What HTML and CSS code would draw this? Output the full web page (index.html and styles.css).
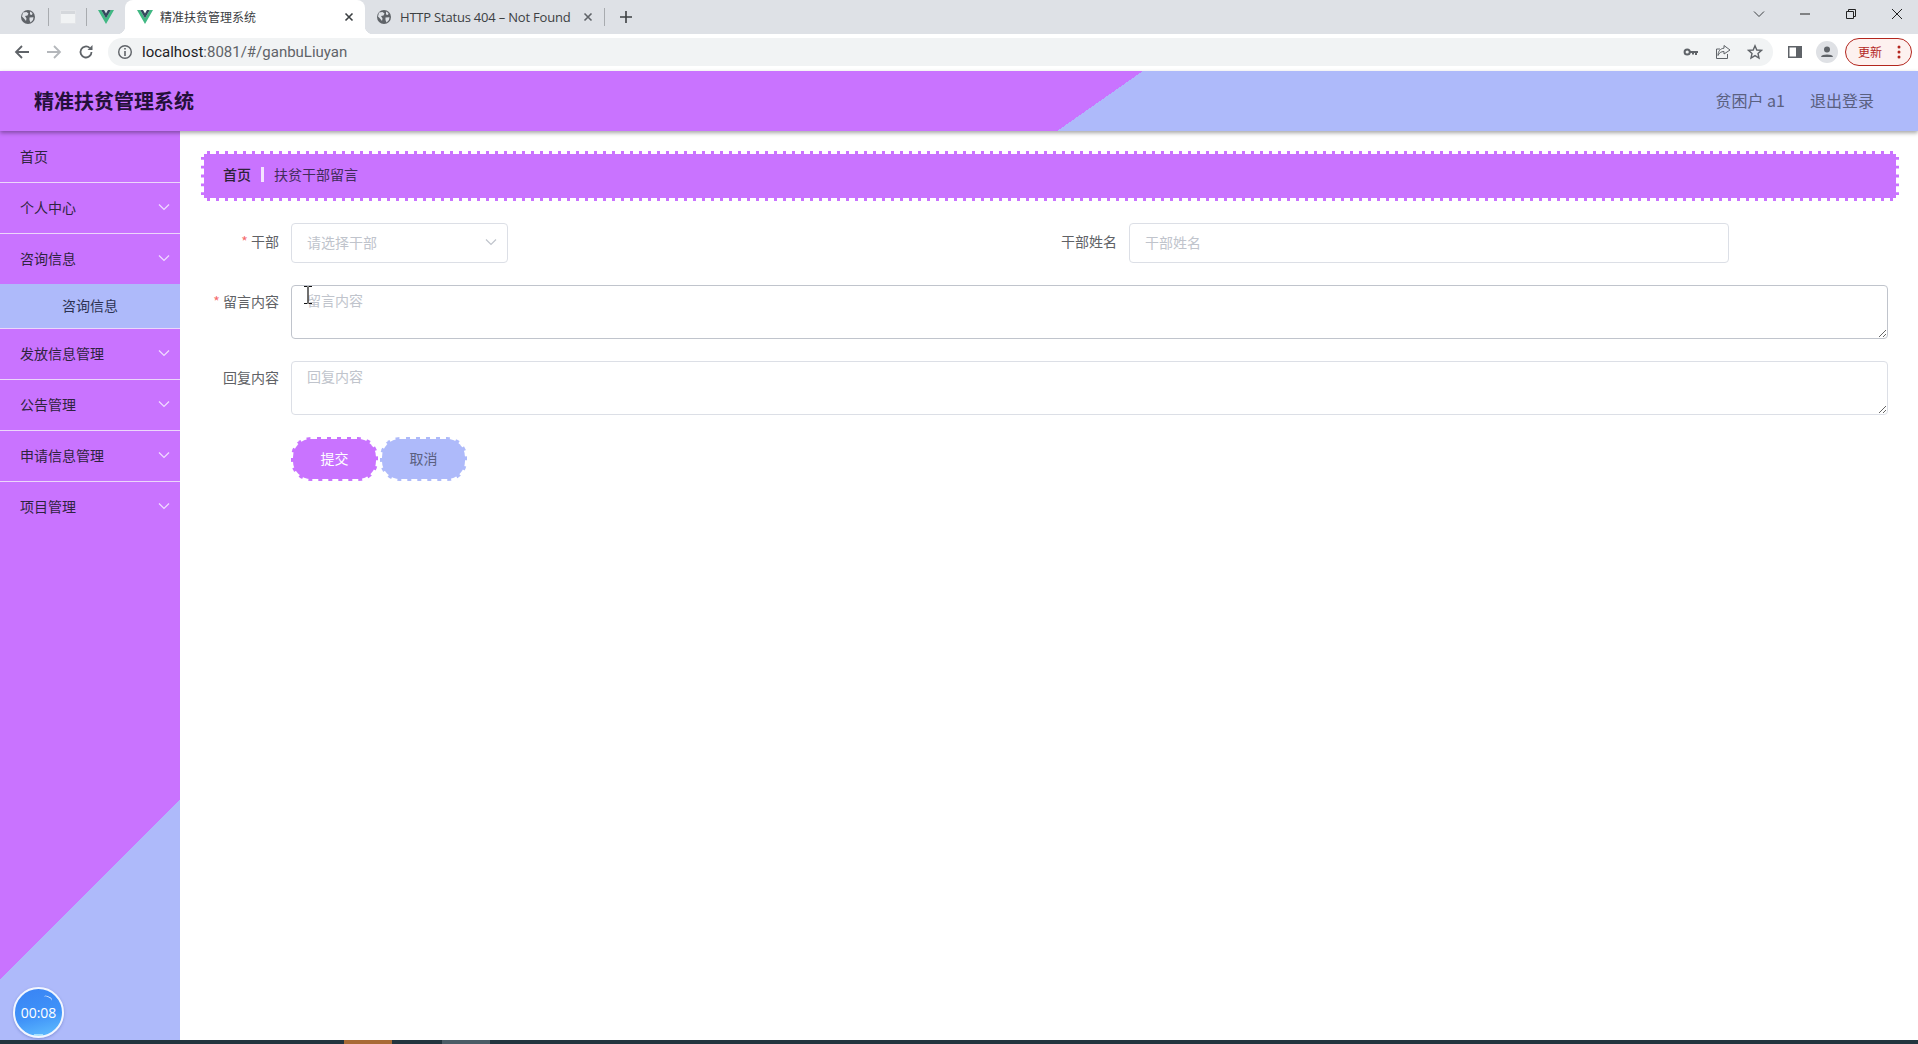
FILE: index.html
```html
<!DOCTYPE html>
<html lang="zh-CN">
<head>
<meta charset="utf-8">
<title>精准扶贫管理系统</title>
<link rel="stylesheet" href="styles.css">
</head>
<body>
<svg class="defs" width="0" height="0" aria-hidden="true">
  <defs>
    <symbol id="globe" viewBox="0 0 16 16"><circle cx="8" cy="8" r="7" fill="#5f6368"/><path d="M3 3.5 6.5 3 8.5 4.5 7.5 6.5 5 7 6.5 9.5 6 12 4 9.5 2 7.5ZM10 2.5 12.5 4 12 6 10 5.5ZM9.5 8.5 13.5 8.2 13 11 10.5 13.5 9.5 11Z" fill="#dee1e6"/></symbol>
    <symbol id="vue" viewBox="0 0 16 14"><path d="M0 0H3.2L8 8.3 12.8 0H16L8 14Z" fill="#41b883"/><path d="M3.2 0H6L8 3.5 10 0H12.8L8 8.3Z" fill="#35495e"/></symbol>
    <symbol id="chev" viewBox="0 0 12 8"><path d="M1 1.5 6 6.5 11 1.5" fill="none" stroke="currentColor" stroke-width="1.2"/></symbol>
  </defs>
</svg>

<div class="tabstrip">
  <div class="pin pin-a"><svg class="ico16"><use href="#globe"/></svg></div>
  <div class="pin pin-b"><svg class="ico16" viewBox="0 0 16 16"><rect x="0.5" y="1.5" width="15" height="13" fill="#f1f3f4" stroke="#e3e5e8"/><rect x="1" y="2" width="14" height="3" fill="#d5d8dc"/></svg></div>
  <div class="pin pin-c"><svg class="ico-vue"><use href="#vue"/></svg></div>
  <div class="tab tab-active">
    <svg class="ico-vue"><use href="#vue"/></svg>
    <span class="tab-title tab-title-cjk">精准扶贫管理系统</span>
    <svg class="tab-close" viewBox="0 0 10 10"><path d="M1.5 1.5 8.5 8.5M8.5 1.5 1.5 8.5" stroke="#3c4043" stroke-width="1.6"/></svg>
  </div>
  <div class="tab tab-idle">
    <svg class="ico16"><use href="#globe"/></svg>
    <span class="tab-title">HTTP Status 404 – Not Found</span>
    <svg class="tab-close" viewBox="0 0 10 10"><path d="M1.5 1.5 8.5 8.5M8.5 1.5 1.5 8.5" stroke="#5f6368" stroke-width="1.6"/></svg>
  </div>
  <svg class="tab-new" viewBox="0 0 12 12"><path d="M6 0V12M0 6H12" stroke="#3c4043" stroke-width="1.6"/></svg>
  <div class="win">
    <div class="win-btn"><svg class="win-chev" viewBox="0 0 12 8"><path d="M1 1.5 6 6.5 11 1.5" fill="none" stroke="#3c4043" stroke-width="1"/></svg></div>
    <div class="win-btn"><svg class="ico10" viewBox="0 0 10 10"><path d="M0 5H10" stroke="#222" stroke-width="1"/></svg></div>
    <div class="win-btn"><svg class="ico10" viewBox="0 0 10 10"><path d="M.5 2.5H7.5V9.5H.5ZM2.5 2.5V.5H9.5V7.5H7.5" fill="none" stroke="#222" stroke-width="1"/></svg></div>
    <div class="win-btn"><svg class="ico10" viewBox="0 0 10 10"><path d="M0 0 10 10M10 0 0 10" stroke="#222" stroke-width="1"/></svg></div>
  </div>
</div>

<div class="toolbar">
  <div class="nav-btn"><svg class="ico16" viewBox="0 0 16 16"><path d="M15 8H2M8 2 2 8 8 14" fill="none" stroke="#5f6368" stroke-width="1.8"/></svg></div>
  <div class="nav-btn"><svg class="ico16" viewBox="0 0 16 16"><path d="M1 8H14M8 2 14 8 8 14" fill="none" stroke="#b4b7bb" stroke-width="1.8"/></svg></div>
  <div class="nav-btn"><svg class="ico16" viewBox="0 0 16 16"><path d="M13.5 8A5.5 5.5 0 1 1 11.7 3.9" fill="none" stroke="#5f6368" stroke-width="1.8"/><path d="M9.5 6H14.5V1Z" fill="#5f6368"/></svg></div>
  <div class="omnibox">
    <svg class="ico16" viewBox="0 0 16 16"><circle cx="8" cy="8" r="6.3" fill="none" stroke="#5f6368" stroke-width="1.4"/><path d="M8 7V12M8 4V5.6" stroke="#5f6368" stroke-width="1.6"/></svg>
    <span class="url"><span class="url-host">localhost</span>:8081/#/ganbuLiuyan</span>
    <div class="omni-icons">
      <div class="nav-btn"><svg class="ico16" viewBox="0 0 16 16"><circle cx="4.2" cy="8" r="2.6" fill="none" stroke="#5f6368" stroke-width="2"/><path d="M7 7H15V9H14V11H12V9H11V10.5H9V9H7Z" fill="#5f6368"/></svg></div>
      <div class="nav-btn"><svg class="ico16" viewBox="0 0 16 16"><path d="M9 1.5 15 6 9 10V7.5C6 7.5 4 9 3 11.5 3 7 5.500 4.500 9 4.200Z" fill="none" stroke="#5f6368" stroke-width="1"/><path d="M5 5H1.500V14.500H12.500V10" fill="none" stroke="#5f6368" stroke-width="1"/></svg></div>
      <div class="nav-btn"><svg class="ico16" viewBox="0 0 16 16"><path d="M8 1.800 9.800 6 14.500 6.400 11 9.400 12 14 8 11.600 4 14 5 9.400 1.500 6.400 6.200 6Z" fill="none" stroke="#5f6368" stroke-width="1.400"/></svg></div>
    </div>
  </div>
  <div class="tool-right">
    <div class="nav-btn"><svg class="ico16" viewBox="0 0 16 16"><rect x="1" y="2" width="14" height="12" fill="#5f6368"/><rect x="2.500" y="3.500" width="6.500" height="9" fill="#fff"/></svg></div>
    <div class="nav-btn"><svg class="avatar" viewBox="0 0 22 22"><circle cx="11" cy="11" r="11" fill="#dfe1e5"/><circle cx="11" cy="8.500" r="3" fill="#5f6368"/><path d="M5 16C5.500 12.800 16.500 12.800 17 16Z" fill="#5f6368"/></svg></div>
    <div class="update">
      <span class="update-text">更新</span>
      <svg class="update-dots" viewBox="0 0 4 14"><circle cx="2" cy="2" r="1.500"/><circle cx="2" cy="7" r="1.500"/><circle cx="2" cy="12" r="1.500"/></svg>
    </div>
  </div>
</div>

<header class="app-header">
  <div class="app-title">精准扶贫管理系统</div>
  <div class="app-user">
    <span>贫困户 a1</span>
    <span>退出登录</span>
  </div>
</header>

<main class="app-main">
  <aside class="sidebar">
    <div class="menu-item">首页</div>
    <div class="menu-item">个人中心<svg class="menu-chev"><use href="#chev"/></svg></div>
    <div class="menu-item menu-open">咨询信息<svg class="menu-chev"><use href="#chev"/></svg></div>
    <div class="menu-sub">咨询信息</div>
    <div class="menu-item">发放信息管理<svg class="menu-chev"><use href="#chev"/></svg></div>
    <div class="menu-item">公告管理<svg class="menu-chev"><use href="#chev"/></svg></div>
    <div class="menu-item">申请信息管理<svg class="menu-chev"><use href="#chev"/></svg></div>
    <div class="menu-item menu-last">项目管理<svg class="menu-chev"><use href="#chev"/></svg></div>
    <div class="timer">00:08</div>
  </aside>

  <section class="content">
    <nav class="crumb">
      <span class="crumb-home">首页</span>
      <span class="crumb-sep"></span>
      <span class="crumb-page">扶贫干部留言</span>
    </nav>

    <form class="form">
      <div class="form-row form-row-split">
        <div class="field">
          <label class="field-label"><span class="req">*</span> 干部</label>
          <div class="select">
            <span>请选择干部</span>
            <svg class="select-chev"><use href="#chev"/></svg>
          </div>
        </div>
        <div class="field">
          <label class="field-label">干部姓名</label>
          <input class="input" type="text" placeholder="干部姓名">
        </div>
      </div>
      <div class="field field-area">
        <label class="field-label"><span class="req">*</span> 留言内容</label>
        <textarea class="area area-hover" placeholder="留言内容"></textarea>
      </div>
      <div class="field field-area">
        <label class="field-label">回复内容</label>
        <textarea class="area" placeholder="回复内容"></textarea>
      </div>
      <div class="actions">
        <button class="btn btn-primary" type="button">提交</button>
        <button class="btn btn-cancel" type="button">取消</button>
      </div>
    </form>
    <svg class="ibeam" viewBox="0 0 8 18"><path d="M0 .5H3.500M4.500 .5H8M4 1V17M0 17.500H3.500M4.500 17.500H8" fill="none" stroke="#111" stroke-width="1.200"/></svg>
  </section>
</main>

<div class="taskbar">
  <span class="task task-orange"></span>
  <span class="task task-grey"></span>
</div>
</body>
</html>
```

FILE: styles.css
```css
* { box-sizing: border-box; }

html, body {
  margin: 0;
  height: 100%;
  overflow: hidden;
}

body {
  display: flex;
  flex-direction: column;
  height: 1044px;
  background: #fff;
  font-family: "Noto Sans CJK SC", "Noto Sans", sans-serif;
  font-size: 14px;
}

.defs { display: block; height: 0; }

.ico16 { width: 16px; height: 16px; display: block; flex: none; }
.ico10 { width: 10px; height: 10px; display: block; }
.ico-vue { width: 16px; height: 14px; display: block; flex: none; }

/* browser tab strip */
.tabstrip {
  height: 34px;
  flex: none;
  display: flex;
  align-items: stretch;
  padding-left: 8px;
  background: #dee1e6;
}

.pin {
  display: flex;
  align-items: center;
  justify-content: center;
  position: relative;
}
.pin-a { width: 41px; padding-right: 1px; }
.pin-b { width: 38px; }
.pin-c { width: 38px; }
.pin-a::after, .pin-b::after {
  content: "";
  position: absolute;
  right: 0;
  top: 8px;
  bottom: 8px;
  width: 1px;
  background: #a8abaf;
}

.tab {
  display: flex;
  align-items: center;
  position: relative;
}
.tab-active {
  width: 240px;
  padding-left: 12px;
  background: #fff;
  border-radius: 8px 8px 0 0;
}
.tab-active::before, .tab-active::after {
  content: "";
  position: absolute;
  bottom: 0;
  width: 8px;
  height: 8px;
}
.tab-active::before {
  left: -8px;
  background: radial-gradient(circle at 0 0, #dee1e6 8px, #fff 8.500px);
}
.tab-active::after {
  right: -8px;
  background: radial-gradient(circle at 100% 0, #dee1e6 8px, #fff 8.500px);
}
.tab-idle {
  width: 240px;
  padding-left: 11px;
  position: relative;
}
.tab-idle::after {
  content: "";
  position: absolute;
  left: 239px;
  top: 8px;
  bottom: 8px;
  width: 1px;
  background: #a8abaf;
}
.tab-title {
  margin-left: 8px;
  font: 13px/16px "Open Sans", "Noto Sans", sans-serif;
  color: #3c4043;
  white-space: nowrap;
}
.tab-title-cjk {
  margin-left: 7px;
  font: 12px/16px "Noto Sans CJK SC", sans-serif;
  width: 182px;
}
.tab-idle .tab-title { width: 180px; margin-left: 8px; letter-spacing: -.2px; }
.tab-close { width: 10px; height: 10px; display: block; flex: none; margin-left: 0; }
.tab-idle .tab-close { margin-left: 3px; }
.tab-active .tab-close { margin-left: 2px; }
.tab-new { width: 12px; height: 12px; align-self: center; margin-left: 15px; flex: none; }

.win {
  margin-left: auto;
  display: flex;
  gap: 4px;
}
.win-btn {
  width: 42px;
  display: flex;
  align-items: flex-start;
  justify-content: center;
  padding-top: 9px;
}
.win-chev { width: 12px; height: 8px; display: block; margin-top: 1px; }

/* browser toolbar */
.toolbar {
  height: 37px;
  flex: none;
  display: flex;
  align-items: center;
  padding: 0 0 2px 6px;
  background: #fff;
}
.nav-btn {
  width: 32px;
  height: 28px;
  flex: none;
  display: flex;
  align-items: center;
  justify-content: center;
}
.omnibox {
  width: 1665px;
  height: 28px;
  margin-left: 6px;
  padding: 0 2px 0 9px;
  display: flex;
  align-items: center;
  flex: none;
  border-radius: 14px;
  background: #f1f3f4;
}
.url {
  margin-left: 9px;
  font: 15px/20px Roboto, "Noto Sans", sans-serif;
  color: #5f6368;
  white-space: nowrap;
}
.url-host { color: #202124; }
.omni-icons {
  margin-left: auto;
  display: flex;
}
.tool-right {
  margin-left: 6px;
  display: flex;
  align-items: center;
}
.avatar { width: 22px; height: 22px; display: block; }
.update {
  width: 67px;
  height: 28px;
  margin-left: 2px;
  padding: 0 10px 0 12px;
  display: flex;
  align-items: center;
  justify-content: space-between;
  border: 1px solid #b3261e;
  border-radius: 14px;
  background: #fdf1ef;
}
.update-text { font-size: 12px; line-height: 16px; color: #b3261e; }
.update-dots { width: 4px; height: 14px; display: block; fill: #b3261e; }

/* app header */
.app-header {
  height: 60px;
  flex: none;
  display: flex;
  align-items: center;
  justify-content: space-between;
  padding: 0 44px 0 34px;
  position: relative;
  z-index: 2;
  background: linear-gradient(145deg, #c973ff 655.5px, #aebafa 655.5px);
  box-shadow: 0 2px 4px rgba(0, 0, 0, .35);
}
.app-title {
  font-size: 20px;
  font-weight: 700;
  line-height: 28px;
  color: #24103a;
}
.app-user {
  display: flex;
  gap: 25px;
  padding-bottom: 2px;
  font-size: 16px;
  line-height: 22px;
  color: #5a6080;
}

/* main */
.app-main {
  flex: 1;
  min-height: 0;
  display: flex;
}
.sidebar {
  width: 180px;
  flex: none;
  padding-top: 1px;
  position: relative;
  background: linear-gradient(135deg, #c973ff 600.3px, #aebafa 600.3px);
}
.menu-item {
  height: 51px;
  padding: 0 10px 3px 20px;
  display: flex;
  align-items: center;
  justify-content: space-between;
  border-bottom: 1px solid #ecd6fb;
  font-size: 14px;
  color: #2f2340;
}
.menu-open { height: 50px; border-bottom: 0; }
.menu-last { border-bottom: 0; }
.menu-chev {
  width: 12px;
  height: 8px;
  display: block;
  color: #f0dcff;
}
.menu-sub {
  height: 45px;
  padding-bottom: 2px;
  display: flex;
  align-items: center;
  justify-content: center;
  background: #aebafa;
  border-bottom: 1px solid #ecd6fb;
  color: #2d3352;
}
.timer {
  position: absolute;
  left: 13px;
  bottom: 2px;
  width: 51px;
  height: 51px;
  display: flex;
  align-items: center;
  justify-content: center;
  border: 2px solid #f2f6ff;
  border-radius: 50%;
  background:
    radial-gradient(ellipse 12px 5px at 50% 102%, rgba(190, 240, 255, .75) 60%, transparent 62%),
    linear-gradient(165deg, #3a86f5 10%, #3f92f8 55%, #62c0ff 100%);
  box-shadow: 0 1px 3px rgba(60, 80, 160, .4);
  font: 14px/18px "Open Sans", sans-serif;
  color: #fff;
}
.timer::after {
  content: "";
  position: absolute;
  top: 7px;
  right: 10px;
  width: 9px;
  height: 5px;
  border-top: 1px solid rgba(255, 255, 255, .75);
  border-radius: 50%;
  transform: rotate(25deg);
}

/* content */
.content {
  flex: 1;
  min-width: 0;
  position: relative;
  padding: 20px 19px 0 21px;
}
.crumb {
  height: 50px;
  padding: 0 0 4px 19px;
  display: flex;
  align-items: center;
  border: 3px dashed #fff;
  background: #c973ff;
  color: #2f2340;
}
.crumb-home { font-weight: 500; color: #2d2238; }
.crumb-sep {
  width: 3px;
  height: 15px;
  margin: 0 10px;
  background: #f4e4ff;
}
.crumb-page { color: #432c5c; }

.form {
  margin: 0 11px 0 -10px;
  padding-top: 22px;
  display: flex;
  flex-direction: column;
  gap: 22px;
}
.form-row-split {
  display: grid;
  grid-template-columns: 838px 1fr;
}
.field { display: flex; }
.field-label {
  width: 100px;
  flex: none;
  padding: 0 12px 3px 0;
  text-align: right;
  font-size: 14px;
  line-height: 37px;
  color: #606266;
}
.field-area .field-label { line-height: 33px; }
.req { color: #f56c6c; }

.select, .input {
  height: 40px;
  border: 1px solid #dcdfe6;
  border-radius: 4px;
  background: #fff;
  font-family: inherit;
  font-size: 14px;
}
.select {
  width: 217px;
  padding: 0 10px 3px 15px;
  display: flex;
  align-items: center;
  justify-content: space-between;
  color: #c0c4cc;
}
.select-chev { width: 12px; height: 8px; display: block; color: #c0c4cc; }
.input {
  width: 600px;
  padding: 0 15px 3px;
  outline: 0;
}
.input::placeholder, .area::placeholder { color: #c0c4cc; opacity: 1; }
.area {
  flex: 1;
  min-width: 0;
  height: 54px;
  padding: 4px 15px;
  display: block;
  border: 1px solid #dcdfe6;
  border-radius: 4px;
  outline: 0;
  background: #fff;
  font-family: inherit;
  font-size: 14px;
  line-height: 21px;
}
.area-hover { border-color: #c0c4cc; }

.actions {
  display: flex;
  gap: 2px;
  padding-left: 100px;
}
.btn {
  width: 87px;
  height: 44px;
  padding: 0 0 3px;
  border: 2px dashed #fff;
  border-radius: 20px;
  font-family: inherit;
  font-size: 14px;
  line-height: 20px;
}
.btn-primary { background: #c973ff; color: #fff; }
.btn-cancel { background: #aebafa; color: #5a6080; }

.ibeam {
  position: absolute;
  left: 124px;
  top: 155px;
  width: 8px;
  height: 18px;
  display: block;
}

/* bottom strip */
.taskbar {
  height: 4px;
  flex: none;
  display: flex;
  padding-left: 344px;
  background: #22343e;
}
.task { width: 48px; display: block; }
.task-orange { background: #a96a35; }
.task-grey { background: #4b5c66; margin-left: 50px; }
```
